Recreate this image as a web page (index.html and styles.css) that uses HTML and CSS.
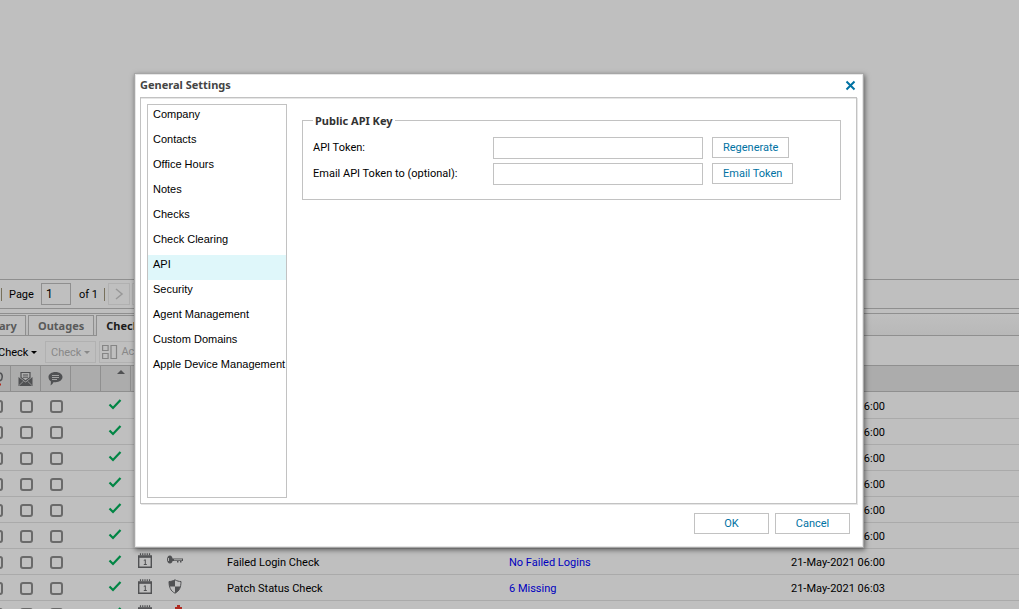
FILE: index.html
```html
<!DOCTYPE html>
<html lang="en">
<head>
    <meta charset="UTF-8">
    <meta name="viewport" content="width=device-width, initial-scale=1.0">
    <title>General Settings</title>
    <link rel="stylesheet" href="styles.css">
</head>
<body>
    <!-- Shared icons -->
    <svg class="icon-defs" width="0" height="0">
        <symbol id="tick" viewBox="0 0 14 12"><path d="M1.500 6.500l3.500 3.500L12.500 2" fill="none" stroke="#008544" stroke-width="2.200"/></symbol>
        <symbol id="calendar" viewBox="0 0 14 15">
            <path d="M.7 3h12.600v11.300H.7z" fill="none" stroke="#505153" stroke-width="1.400"/>
            <path d="M0 4h14" stroke="#505153" stroke-width="1.600"/>
            <path d="M2.500 .3v2M4.750 .3v2M7 .3v2M9.250 .3v2M11.500 .3v2" stroke="#505153" stroke-width="1.200"/>
            <path d="M5.800 7.500l1.500-.8v5M5.800 11.500h3" fill="none" stroke="#505153"/>
        </symbol>
        <symbol id="key" viewBox="0 0 18 10">
            <path d="M4 .5C2 .5 1 2.500 1 4.500s1 4 3 4c1.500 0 2.300-1.300 2.600-2.500H11v1.500h1.500V6H14v1.500h1.500V6H17V3.500H6.600C6.300 2 5.500 .5 4 .5z" fill="#505153"/>
            <path d="M2.500 3v3M8 4.800h8" stroke="#bfbfbf" stroke-width=".9"/>
        </symbol>
        <symbol id="shield" viewBox="0 0 14 15">
            <path d="M7 .8C5 2 3 2.500 1 2.500 1 8 2.500 12 7 14.200 11.500 12 13 8 13 2.500 11 2.500 9 2 7 .8z" fill="#bfbfbf" stroke="#505153"/>
            <path d="M7 .8C5 2 3 2.500 1 2.500c0 2 .1 3.500 .5 5H7zM7 7.500h5.500C11.600 10.500 10 12.800 7 14.200z" fill="#505153"/>
        </symbol>
    </svg>

    <div class="page">
        <div class="device-list"></div>

        <div class="paging">
            <span class="separator"></span>
            <label for="page-number">Page</label>
            <input id="page-number" type="text" value="1">
            <span class="page-count">of 1</span>
            <span class="separator"></span>
            <button class="page-btn" aria-label="Next page"><svg width="10" height="12" viewBox="0 0 10 12"><path d="M2 1l6 5-6 5" fill="none" stroke="#989898" stroke-width="1.500"/></svg></button>
            <button class="page-btn" aria-label="Last page"></button>
        </div>

        <div class="tabs">
            <button class="tab tab-cut">ary</button>
            <button class="tab">Outages</button>
            <button class="tab active">Checks</button>
        </div>

        <div class="toolbar">
            <button class="tool tool-cut">Check<i class="caret"></i></button>
            <button class="tool" disabled>Check<i class="caret"></i></button>
            <button class="tool tool-action" disabled><svg width="16" height="16" viewBox="0 0 16 16"><path d="M.6 1.500h5.500v5H.6zM.6 9.500h5.500v5H.6zM9 1.500h5.500v13H9z" fill="none" stroke="#858585" stroke-width="1.200"/></svg>Actions</button>
        </div>

        <table class="checks">
            <colgroup>
                <col class="c-first"><col class="c-icon"><col class="c-icon"><col class="c-icon"><col class="c-icon"><col class="c-icon"><col class="c-icon"><col class="c-icon"><col class="c-text"><col class="c-text"><col>
            </colgroup>
            <thead>
                <tr>
                    <th><svg width="4" height="14" viewBox="0 0 4 14"><path d="M0 1c3 1 3 6 0 8" fill="none" stroke="#505153" stroke-width="1.500"/><path d="M0 12.500h1" stroke="#b02a20" stroke-width="2"/></svg></th>
                    <th><svg width="16" height="16" viewBox="0 0 16 16"><path d="M3 1.500h9v5l-4.500 3.500L3 6.500z" fill="#acacac" stroke="#505153" stroke-width="1.200"/><path d="M5 4h5M5 6.200h5" stroke="#505153"/><path d="M.5 6l7 5.500 7-5.500v9H.5z" fill="#505153"/><path d="M1 14.500l4.500-4.300M14 14.500L9.500 10.200" stroke="#acacac" stroke-width=".7"/></svg></th>
                    <th><svg width="16" height="14" viewBox="0 0 16 14"><path d="M7.500 0C11.500 0 14.500 2.200 14.500 5s-3 5.200-7 5.200c-.7 0-1.200 0-1.800-.2C5 11.500 3.800 12.700 2.500 13.500c.4-1.400 .5-2.900 .3-4.200C1.300 8.300 .5 6.800 .5 5 .5 2.200 3.500 0 7.500 0z" fill="#505153"/><path d="M4 3.500h7M4 5.500h7M4 7.500h5" stroke="#acacac" stroke-width=".9"/></svg></th>
                    <th></th>
                    <th class="sorted"><i class="sort-arrow"></i></th>
                    <th></th><th></th><th></th><th></th><th></th><th></th>
                </tr>
            </thead>
            <tbody id="rows"></tbody>
        </table>
    </div>

    <div class="dialog" role="dialog" aria-labelledby="dialog-title">
        <div class="dialog-header">
            <h1 id="dialog-title">General Settings</h1>
            <button class="close" aria-label="Close"><svg width="11" height="11" viewBox="0 0 11 11"><path d="M1.500 1.500l8 8M9.500 1.500l-8 8" stroke="#0072a3" stroke-width="2"/></svg></button>
        </div>
        <div class="dialog-body">
            <nav class="menu">
                <a href="#">Company</a>
                <a href="#">Contacts</a>
                <a href="#">Office Hours</a>
                <a href="#">Notes</a>
                <a href="#">Checks</a>
                <a href="#">Check Clearing</a>
                <a href="#" class="selected">API</a>
                <a href="#">Security</a>
                <a href="#">Agent Management</a>
                <a href="#">Custom Domains</a>
                <a href="#">Apple Device Management</a>
            </nav>
            <div class="settings">
                <fieldset>
                    <legend>Public API Key</legend>
                    <div class="field">
                        <label for="token">API Token:</label>
                        <input id="token" type="text">
                        <button class="btn">Regenerate</button>
                    </div>
                    <div class="field">
                        <label for="email">Email API Token to (optional):</label>
                        <input id="email" type="text">
                        <button class="btn">Email Token</button>
                    </div>
                </fieldset>
            </div>
        </div>
        <div class="dialog-footer">
            <button class="btn wide">OK</button>
            <button class="btn wide">Cancel</button>
        </div>
    </div>

    <script src="script.js"></script>
</body>
</html>
```
FILE: styles.css
```css
* {
    box-sizing: border-box;
}

body {
    margin: 0;
    height: 100vh;
    overflow: hidden;
    background: #bfbfbf;
    color: #000;
    font-family: Tahoma, Roboto, sans-serif;
    font-size: 11px;
    line-height: 16px;
}

button, input {
    font: inherit;
    margin: 0;
}

button {
    color: inherit;
    white-space: nowrap;
}

svg {
    display: block;
    flex: none;
}

.icon-defs {
    position: absolute;
}

.page {
    height: 100vh;
    overflow: hidden;
}

.device-list {
    height: 279px;
}

/* Paging bar */
.paging {
    display: flex;
    align-items: center;
    height: 30px;
    padding-left: 1px;
    border-top: 1px solid #8f8f8f;
    border-bottom: 1px solid #8f8f8f;
}

.separator {
    width: 1px;
    height: 13px;
    background: #77705c;
}

.paging label {
    width: 32px;
    margin-left: 7px;
    padding-top: 2px;
}

.paging input {
    width: 30px;
    height: 22px;
    margin-right: 8px;
    padding: 0 4px;
    border: 1px solid #8f8f8f;
    border-radius: 0;
    background: #bfbfbf;
    font-size: 12px;
}

.page-count {
    width: 25px;
    padding-top: 2px;
}

.page-btn {
    display: flex;
    align-items: center;
    justify-content: center;
    width: 22px;
    height: 22px;
    margin-left: 3px;
    padding: 0;
    border: 1px solid #b1b1b1;
    background: none;
}

.page-btn + .page-btn {
    margin-left: 2px;
}

/* Tabs */
.tabs {
    display: flex;
    align-items: flex-end;
    gap: 2px;
    height: 23px;
    margin-top: 4px;
    border-top: 1px solid #8f8f8f;
    border-bottom: 1px solid #8f8f8f;
    background: linear-gradient(#bfbfbf, #b8b8b8);
}

.tab {
    height: 20px;
    padding: 0 9px;
    border: 1px solid #8f8f8f;
    border-bottom: 0;
    background: #bfbfbf;
    color: #5a5a5a;
    font-family: Tahoma, "Noto Sans", sans-serif;
    font-weight: bold;
}

.tab-cut {
    width: 26px;
    padding: 0 9px 0 0;
    border-left: 0;
    text-align: left;
    text-indent: -1px;
}

.tab.active {
    height: 21px;
    margin-bottom: -1px;
    color: #1c1c1c;
}

/* Toolbar */
.toolbar {
    display: flex;
    align-items: center;
    gap: 3px;
    height: 29px;
    padding-top: 3px;
}

.tool {
    display: flex;
    align-items: center;
    height: 22px;
    padding: 1px 5px 0;
    border: 1px solid #b1b1b1;
    background: none;
}

.tool:disabled {
    color: #888;
}

.tool-cut {
    width: 44px;
    margin-left: -2px;
    padding: 1px 0 0;
    border: 0;
}

.tool-action {
    gap: 3px;
    padding: 0 5px 0 2px;
}

.caret {
    margin-left: 3px;
    border: 3px solid transparent;
    border-top-color: currentColor;
    border-bottom: 0;
}

/* Checks grid */
.checks {
    width: 100%;
    table-layout: fixed;
    border-collapse: separate;
    border-spacing: 0;
}

.c-first {
    width: 11px;
}

.c-icon {
    width: 30px;
}

.c-text {
    width: 282px;
}

.checks th {
    height: 27px;
    padding: 0;
    border: solid #8f8f8f;
    border-width: 1px 0;
    background: #acacac;
}

.checks th:nth-child(-n+7) {
    border-right-width: 1px;
}

.checks th svg {
    margin: 0 auto;
}

.checks th:first-child svg {
    margin: 0;
}

.checks th.sorted {
    vertical-align: top;
}

.sort-arrow {
    display: block;
    width: 8px;
    margin: 4px 0 0 16px;
    border: 4px solid transparent;
    border-top: 0;
    border-bottom-color: #505153;
}

.checks td {
    height: 26px;
    padding: 2px 6px 0;
    border-bottom: 1px solid #aaa;
    white-space: nowrap;
}

.checks tbody tr:first-child td {
    height: 27px;
    border-top: 1px solid #bfbfbf;
}

.checks td:nth-child(-n+8) {
    padding: 0 2px 0 0;
}

.checks td:nth-child(n+5) svg {
    margin: 0 auto 3px;
}

.cut {
    display: flex;
    justify-content: flex-end;
    padding-right: 6px;
}

.checks input {
    display: block;
    flex: none;
    appearance: none;
    width: 13px;
    height: 13px;
    margin: 2px 0 0 9px;
    border: 2px solid #6a6a6a;
    border-radius: 3px;
}

.checks .cut input {
    margin-left: 0;
}

.checks a {
    color: #0000bf;
    text-decoration: none;
}

/* Settings dialog */
.dialog {
    position: absolute;
    top: 73px;
    right: 155px;
    bottom: 61px;
    left: 134px;
    display: flex;
    flex-direction: column;
    padding: 0 5px;
    border: 1px solid #a6a6a6;
    background: #fff;
    box-shadow: inset 0 0 0 1px #e6e6e6, 1px 2px 5px rgba(0, 0, 0, 0.5);
}

.dialog-header {
    display: flex;
    align-items: center;
    justify-content: space-between;
    height: 23px;
}

.dialog-header h1 {
    margin: 0 0 2px;
    color: #444;
    font-family: Tahoma, "Noto Sans", sans-serif;
    font-size: 11px;
}

.close {
    margin-right: 2px;
    padding: 0;
    border: 0;
    background: none;
}

.dialog-body {
    display: flex;
    flex: 1;
    gap: 15px;
    margin-right: 1px;
    padding: 6px 15px 5px 6px;
    border: 1px solid #c2c2c2;
    box-shadow: inset 0 1px #e6e6e6, 1px 1px #e6e6e6;
}

.menu {
    width: 140px;
    border: 1px solid #c2c2c2;
    font-family: "Liberation Sans", Arial, sans-serif;
}

.menu a {
    display: block;
    height: 25px;
    padding: 1px 0 0 5px;
    color: #000;
    text-decoration: none;
    white-space: nowrap;
}

.menu .selected {
    background: #dff7fa;
}

.settings {
    flex: 1;
    padding-top: 8px;
}

fieldset {
    height: 88px;
    margin: 0;
    padding: 8px 10px;
    border: 1px solid #c2c2c2;
}

legend {
    height: 17px;
    padding: 1px 2px 0;
    color: #333;
    font-family: Tahoma, "Noto Sans", sans-serif;
    font-weight: bold;
}

.field {
    display: flex;
    height: 26px;
}

.field label {
    width: 180px;
    line-height: 22px;
}

.field input {
    width: 210px;
    height: 22px;
    margin-right: 9px;
    border: 1px solid #c2c2c2;
}

.btn {
    height: 21px;
    padding: 1px 10px 0;
    border: 1px solid #c2c2c2;
    background: #fff;
    color: #0072a3;
}

.dialog-footer {
    display: flex;
    justify-content: flex-end;
    gap: 6px;
    height: 43px;
    padding: 9px 8px 0 0;
}

.wide {
    width: 75px;
}
```
FILE: script.js
```js
const rows = [
    { date: '21-May-2021 06:00' },
    { date: '21-May-2021 06:00' },
    { date: '21-May-2021 06:00' },
    { date: '21-May-2021 06:00' },
    { date: '21-May-2021 06:00' },
    { date: '21-May-2021 06:00' },
    { icon: 'key', name: 'Failed Login Check', info: 'No Failed Logins', date: '21-May-2021 06:00' },
    { icon: 'shield', name: 'Patch Status Check', info: '6 Missing', date: '21-May-2021 06:03' },
    { icon: 'alert', name: '', info: '', date: '' }
];

const icons = {
    key: '<svg width="18" height="10"><use href="#key"/></svg>',
    shield: '<svg width="14" height="15"><use href="#shield"/></svg>',
    alert: '<svg width="18" height="15"><path d="M11 0h3v2h2v3H9V2h2z" fill="#b02a20"/></svg>'
};

const box = label => `<input type="checkbox" aria-label="${label}">`;

document.getElementById('rows').innerHTML = rows.map(row => `
    <tr>
        <td><div class="cut">${box('Alert')}</div></td>
        <td>${box('Email')}</td>
        <td>${box('SMS')}</td>
        <td></td>
        <td><svg width="14" height="12"><use href="#tick"/></svg></td>
        <td><svg width="14" height="15"><use href="#calendar"/></svg></td>
        <td>${icons[row.icon] || ''}</td>
        <td></td>
        <td>${row.name || ''}</td>
        <td>${row.info ? `<a href="#">${row.info}</a>` : ''}</td>
        <td>${row.date}</td>
    </tr>`).join('');
```
